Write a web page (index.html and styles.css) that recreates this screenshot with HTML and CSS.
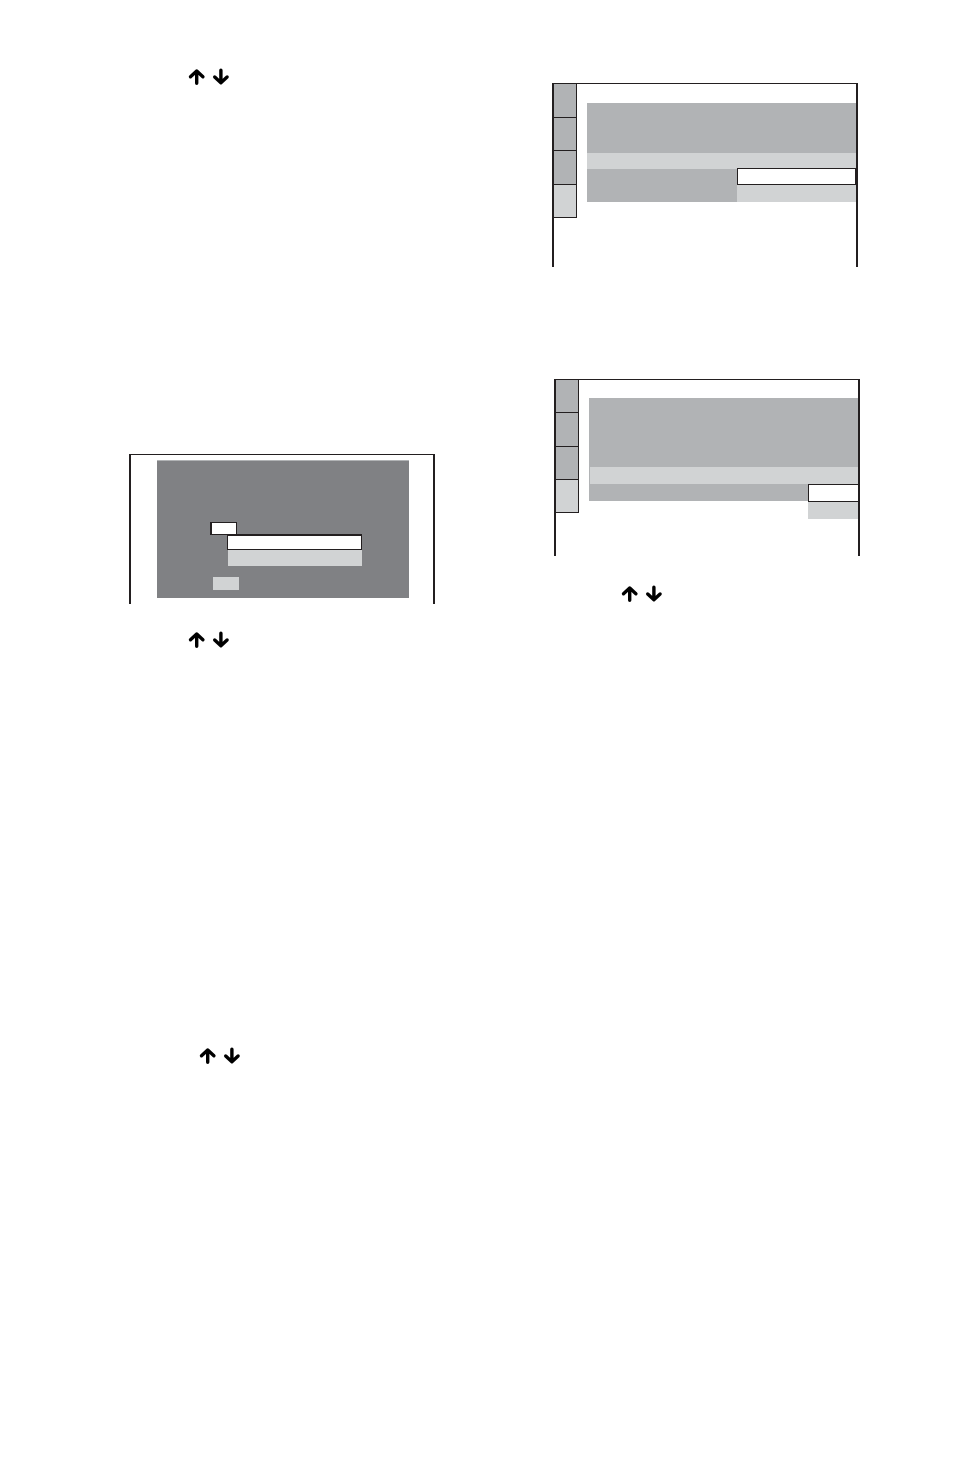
FILE: index.html
```html
<!DOCTYPE html>
<html lang="en">
<head>
  <meta charset="UTF-8" />
  <meta name="viewport" content="width=device-width, initial-scale=1.0"/>
  <title>Menu settings</title>
  <link rel="stylesheet" href="styles.css">
</head>
<body>

  <!-- up / down arrow pair, reused in the steps -->
  <svg class="sprite" width="0" height="0" aria-hidden="true">
    <symbol id="updown" viewBox="0 0 42 18">
      <path d="M8.7 3V15.3M2.5 8.8L8.7 3L14.9 8.8" />
      <path d="M32.9 2.2V14.5M26.7 9L32.9 14.8L39.1 9" />
    </symbol>
  </svg>

  <main class="page">
    <section class="column">
      <svg class="arrows step-first"><use href="#updown" /></svg>

      <div class="screen screen-dialog">
        <div class="dialog">
          <button type="button" class="field" aria-label="Field"></button>
          <div class="dialog-menu">
            <button type="button" class="option selected" aria-label="Option 1"></button>
            <button type="button" class="option" aria-label="Option 2"></button>
          </div>
          <button type="button" class="confirm" aria-label="Confirm"></button>
        </div>
      </div>

      <svg class="arrows step-second"><use href="#updown" /></svg>
      <svg class="arrows step-third"><use href="#updown" /></svg>
    </section>

    <section class="column">
      <div class="screen screen-wide">
        <nav class="tabs">
          <button type="button" class="tab" aria-label="Tab 1"></button>
          <button type="button" class="tab" aria-label="Tab 2"></button>
          <button type="button" class="tab" aria-label="Tab 3"></button>
          <button type="button" class="tab active" aria-label="Tab 4"></button>
        </nav>
        <div class="panel">
          <div class="row current">
            <div class="menu">
              <button type="button" class="option selected" aria-label="Option 1"></button>
              <button type="button" class="option" aria-label="Option 2"></button>
            </div>
          </div>
        </div>
      </div>

      <div class="screen screen-narrow">
        <nav class="tabs">
          <button type="button" class="tab" aria-label="Tab 1"></button>
          <button type="button" class="tab" aria-label="Tab 2"></button>
          <button type="button" class="tab" aria-label="Tab 3"></button>
          <button type="button" class="tab active" aria-label="Tab 4"></button>
        </nav>
        <div class="panel">
          <div class="row current">
            <div class="menu">
              <button type="button" class="option selected" aria-label="Option 1"></button>
              <button type="button" class="option" aria-label="Option 2"></button>
            </div>
          </div>
        </div>
      </div>

      <svg class="arrows step-right"><use href="#updown" /></svg>
    </section>
  </main>

</body>
</html>
```
FILE: styles.css
```css
* {
  box-sizing: border-box;
}
body {
  font-family: "Liberation Sans", Arial, sans-serif;
  background: #fff;
  margin: 0;
}
button {
  display: block;
  padding: 0;
  border: none;
  border-radius: 0;
  background: #d1d3d4;
}
.sprite {
  position: absolute;
}
.page {
  display: grid;
  grid-template-columns: 306fr 308fr;
  column-gap: 117px;
  padding: 68px 94px 68px 129px;
}
.column {
  display: flex;
  flex-direction: column;
}

/* arrows */
.arrows {
  width: 42px;
  height: 18px;
  fill: none;
  stroke: #000;
  stroke-width: 3.4;
  stroke-linecap: round;
  stroke-linejoin: round;
}
.step-first {
  margin-left: 59px;
}
.step-second {
  margin: 27px 0 0 59px;
}
.step-third {
  margin: 398px 0 0 70px;
}
.step-right {
  margin: 29px 0 0 69px;
}

/* screens */
.screen {
  display: flex;
  align-items: flex-start;
  border: 2px solid #231f20;
  border-top-width: 1px;
  border-bottom: none;
}
.screen-wide {
  margin: 15px 2px 0 0;
  padding-bottom: 49px;
}
.screen-narrow {
  margin: 112px 0 0 2px;
  padding-bottom: 43px;
}
.tabs {
  width: 23px;
  margin-right: 10px;
  border-right: 1px solid #231f20;
}
.tab {
  width: 100%;
  height: 34px;
  background: #b1b3b5;
  border-bottom: 1px solid #231f20;
}
.screen-wide .tab:nth-child(even),
.screen-narrow .tab:nth-child(odd),
.screen-narrow .tab.active {
  height: 33px;
}
.tab.active {
  background: #d1d3d4;
}
.panel {
  flex: 1;
  margin-top: 19px;
  padding: 50px 0 33px;
  background: #b1b3b5;
}
.row {
  position: relative;
  height: 16px;
}
.row.current {
  background: #d1d3d4;
}
.screen-narrow .panel {
  margin-top: 18px;
  padding: 69px 0 17px;
}
.screen-narrow .row {
  height: 17px;
  margin-left: 1px;
}

/* drop-down lists */
.menu {
  position: absolute;
  right: 0;
  top: 15px;
  width: 119px;
}
.option {
  width: 100%;
  height: 17px;
}
.option.selected {
  background: #fff;
  border: 1px solid #231f20;
}
.screen-narrow .menu {
  top: 17px;
  width: 50px;
}
.screen-narrow .option.selected {
  height: 18px;
  border-right: none;
}

/* dialog */
.screen-dialog {
  margin-top: 368px;
  padding: 5px 24px 6px 26px;
}
.dialog {
  flex: 1;
  padding: 61px 47px 8px 53px;
  background: #808184;
  border-top: 1px solid #b1b3b5;
}
.field {
  width: 27px;
  height: 13px;
  background: #fff;
  border: 1px solid #231f20;
  border-left-width: 2px;
}
.dialog-menu {
  display: flex;
  flex-direction: column;
  align-items: flex-end;
  margin: -1px 0 11px 17px;
}
.dialog-menu .option {
  width: calc(100% - 1px);
  height: 16px;
}
.dialog-menu .option.selected {
  width: 100%;
  border-top-width: 2px;
}
.confirm {
  width: 26px;
  height: 13px;
  margin-left: 3px;
}
```
